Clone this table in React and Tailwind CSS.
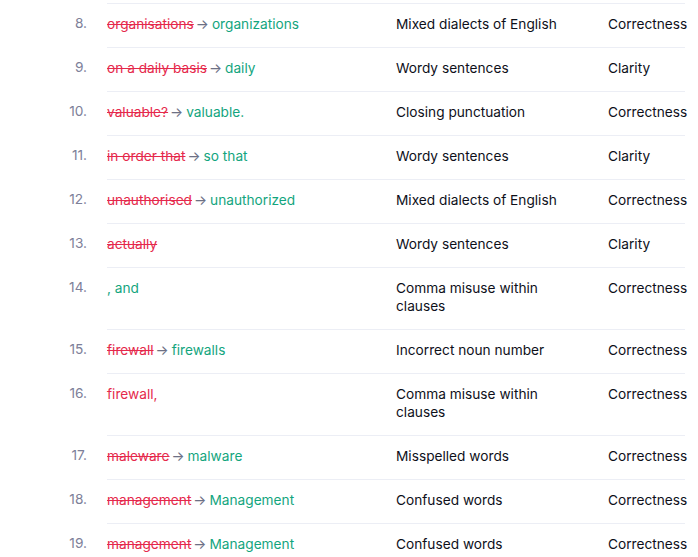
import React from "react";

const rows = [
  { n: 8, del: "organisations", ins: "organizations", issue: "Mixed dialects of English", cat: "Correctness" },
  { n: 9, del: "on a daily basis", ins: "daily", issue: "Wordy sentences", cat: "Clarity" },
  { n: 10, del: "valuable?", ins: "valuable.", issue: "Closing punctuation", cat: "Correctness" },
  { n: 11, del: "in order that", ins: "so that", issue: "Wordy sentences", cat: "Clarity" },
  { n: 12, del: "unauthorised", ins: "unauthorized", issue: "Mixed dialects of English", cat: "Correctness" },
  { n: 13, del: "actually", issue: "Wordy sentences", cat: "Clarity" },
  { n: 14, ins: ", and", issue: "Comma misuse within clauses", cat: "Correctness", two: true },
  { n: 15, del: "firewall", ins: "firewalls", issue: "Incorrect noun number", cat: "Correctness" },
  { n: 16, plain: "firewall,", issue: "Comma misuse within clauses", cat: "Correctness", two: true },
  { n: 17, del: "maleware", ins: "malware", issue: "Misspelled words", cat: "Correctness" },
  { n: 18, del: "management", ins: "Management", issue: "Confused words", cat: "Correctness" },
  { n: 19, del: "management", ins: "Management", issue: "Confused words", cat: "Correctness" },
];

export default function App() {
  return (
    <div
      className="w-[698px] h-[557px] overflow-hidden bg-white text-[13.7px] leading-[18px] text-[#0e101a] pt-[3px]"
      style={{ fontFamily: "Inter, 'Liberation Sans', sans-serif" }}
    >
      {rows.map((r) => (
        <div key={r.n} className="flex">
          <div className="w-[87px] shrink-0 text-right text-[#7d8099] pt-[11px]">{r.n}.</div>
          <div className="ml-[20px] w-[578px] border-t border-[#eceef5] flex pt-[11px] pb-[14px]">
            <div className="w-[289px] shrink-0">
              {r.del && <span className="text-[#e5294c] line-through">{r.del}</span>}
              {r.del && r.ins && <span className="text-[#6d7085] ml-[2px] mr-[3px]">→</span>}
              {r.ins && <span className="text-[#13a57e]">{r.ins}</span>}
              {r.plain && <span className="text-[#e5294c]">{r.plain}</span>}
            </div>
            <div className={r.two ? "w-[212px] shrink-0 pr-[60px]" : "w-[212px] shrink-0"}>{r.issue}</div>
            <div className="w-[77px] shrink-0 whitespace-nowrap">{r.cat}</div>
          </div>
        </div>
      ))}
    </div>
  );
}
